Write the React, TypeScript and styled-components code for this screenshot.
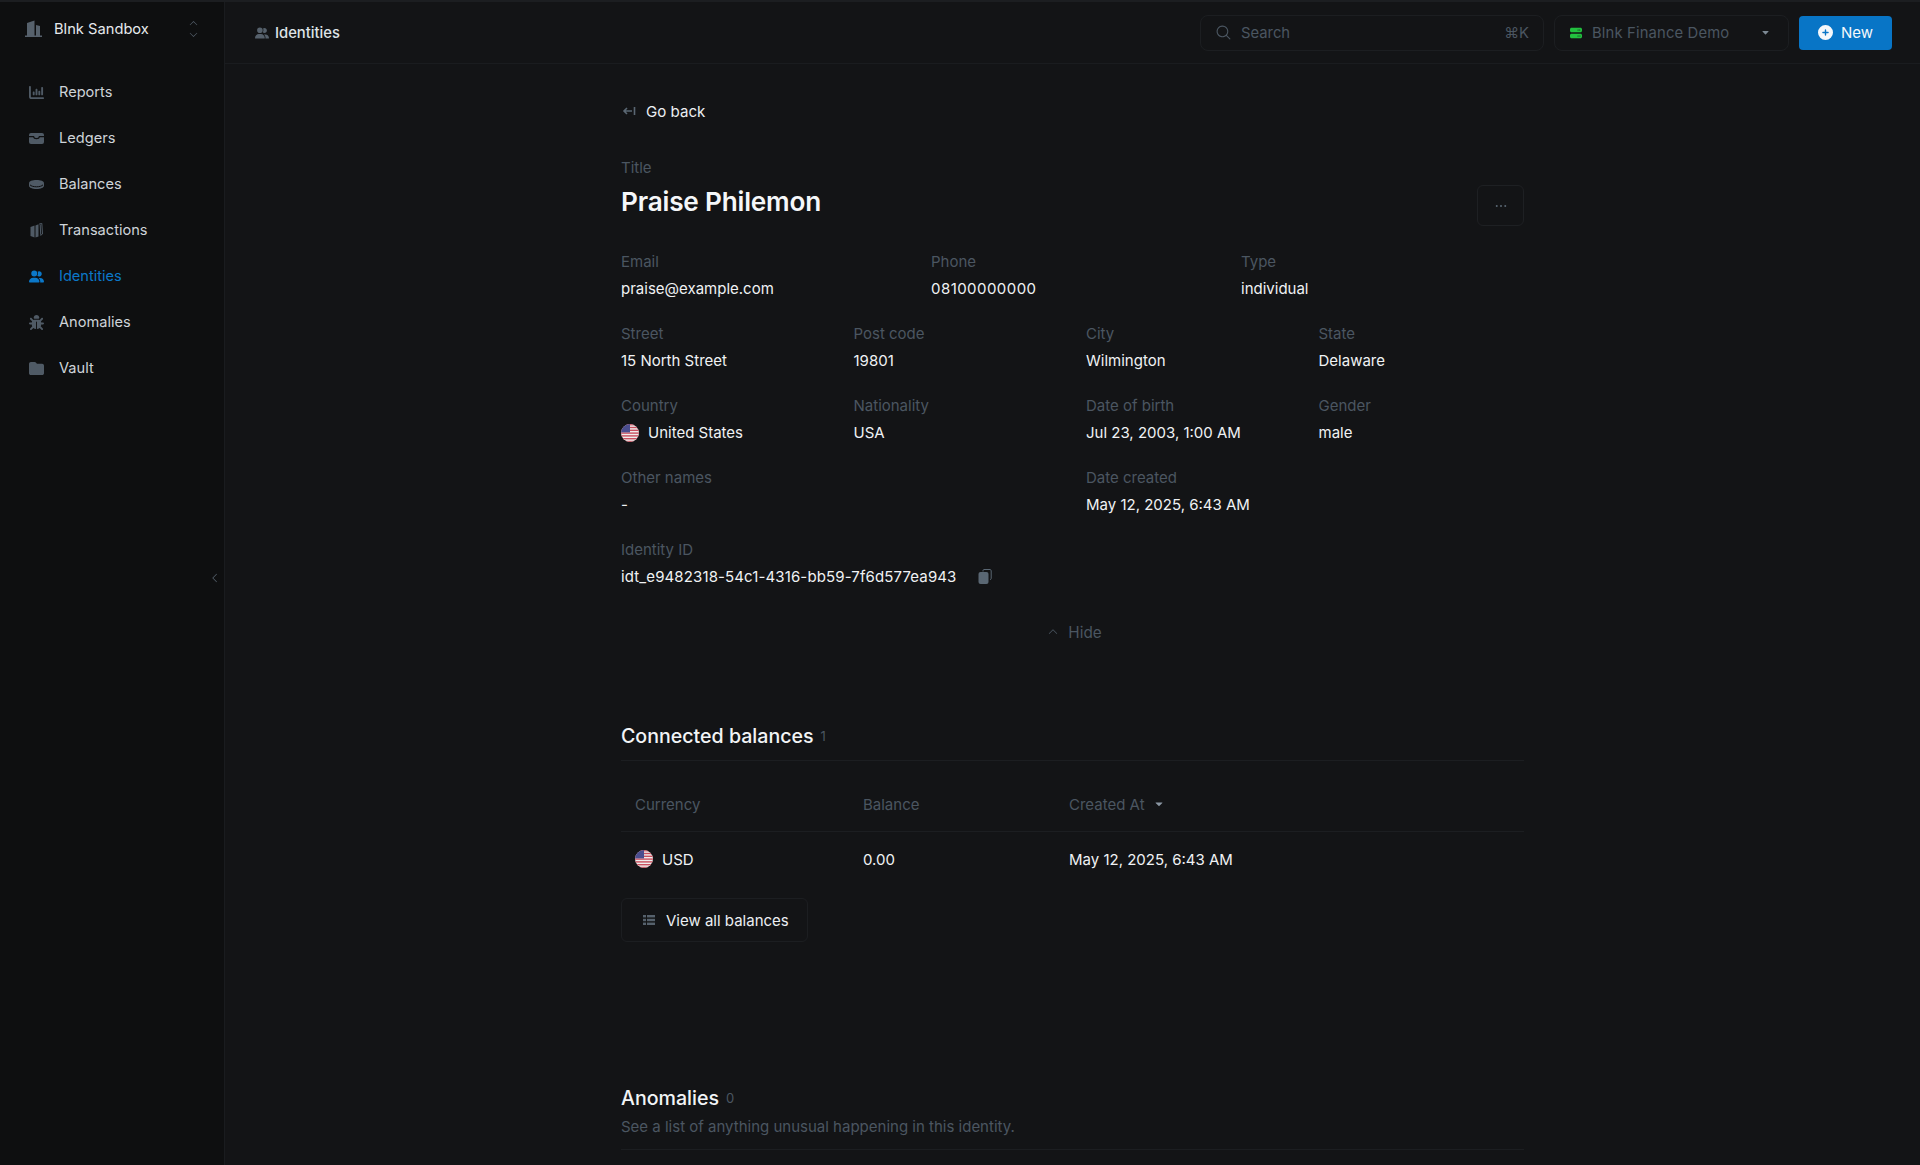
import styled, { createGlobalStyle } from 'styled-components';
import { FaBug, FaChartColumn, FaCirclePlus, FaFolder, FaServer, FaUserGroup } from 'react-icons/fa6';
import {
  PiCaretDown,
  PiCaretDownFill,
  PiCaretLeft,
  PiCaretUp,
  PiDotsThreeBold,
  PiMagnifyingGlass,
} from 'react-icons/pi';
import type { ReactNode } from 'react';

const GlobalStyle = createGlobalStyle`
  html, body {
    margin: 0;
    height: 100%;
    background: #131416;
    overflow: hidden;
  }
  body {
    font-family: Inter, "Liberation Sans", sans-serif;
    font-size: 15px;
    color: #f3f5f7;
  }
`;

const Shell = styled.div`
  display: flex;
  height: 1165px;
  border-top: 2px solid #1c1e21;
  box-sizing: border-box;
  overflow: hidden;
`;

const Sidebar = styled.aside`
  position: relative;
  flex: 0 0 225px;
  box-sizing: border-box;
  background: #0e0f10;
  border-right: 1px solid #1a1c1f;
`;

const Workspace = styled.div`
  display: flex;
  align-items: center;
  height: 53px;
  padding: 0 25px;
  font-size: 14.7px;
  color: #e6e9ec;
`;

const WorkspaceName = styled.span`
  margin-left: 12px;
  flex: 1;
`;

const UpDown = styled.span`
  display: flex;
  flex-direction: column;
  color: #56616c;
  font-size: 11px;
  line-height: 0;
`;

const Nav = styled.nav`
  display: flex;
  flex-direction: column;
  margin-top: 14px;
`;

const NavItem = styled.a<{ $active?: boolean }>`
  display: flex;
  align-items: center;
  height: 46px;
  padding-left: 29px;
  font-size: 14.6px;
  color: ${(p) => (p.$active ? '#0b78c9' : '#cfd4d9')};
`;

const NavIcon = styled.span<{ $active?: boolean }>`
  display: flex;
  align-items: center;
  justify-content: flex-start;
  width: 30px;
  font-size: 15px;
  color: ${(p) => (p.$active ? '#0b78c9' : '#4f5a65')};
`;

const Collapse = styled.span`
  position: absolute;
  top: 50%;
  right: 3px;
  margin-top: -12px;
  color: #56616c;
  font-size: 12px;
  line-height: 0;
`;

const Main = styled.div`
  flex: 1;
  min-width: 0;
`;

const TopBar = styled.header`
  display: flex;
  align-items: center;
  height: 62px;
  box-sizing: border-box;
  padding: 0 28px 0 30px;
  gap: 10px;
  border-bottom: 1px solid #1a1c1f;
`;

const Crumb = styled.div`
  display: flex;
  align-items: center;
  gap: 6px;
  flex: 1;
  font-size: 14.8px;
  font-weight: 500;
  color: #dfe3e7;
  svg {
    font-size: 14px;
    color: #56616c;
  }
`;

const Field = styled.div<{ $width: number }>`
  display: flex;
  align-items: center;
  width: ${(p) => p.$width}px;
  height: 36px;
  box-sizing: border-box;
  padding: 0 14px;
  border: 1px solid #1c1e21;
  border-radius: 8px;
  color: #4b5661;
  font-size: 14.8px;
  > svg {
    flex: none;
  }
`;

const FieldText = styled.span`
  flex: 1;
  margin-left: 9px;
`;

const ServerIcon = styled(FaServer)`
  margin: 0 1px;
  font-size: 12px;
  color: #22c13f;
`;

const FieldCaret = styled(PiCaretDownFill)`
  margin-right: 4px;
  font-size: 9px;
  color: #7d8994;
`;

const NewButton = styled.button`
  display: flex;
  align-items: center;
  justify-content: center;
  gap: 8px;
  width: 93px;
  height: 34px;
  border: 0;
  border-radius: 4px;
  background: #0875c6;
  color: #f5f8fb;
  font: inherit;
  svg {
    font-size: 15px;
  }
`;

const Content = styled.main`
  width: 903px;
  margin: 0 auto;
  padding-top: 35px;
`;

const BackLink = styled.a`
  display: flex;
  align-items: center;
  gap: 10px;
  height: 24px;
  padding-left: 1px;
  font-size: 15.1px;
  color: #eceff2;
`;

const Label = styled.div`
  height: 22px;
  line-height: 22px;
  color: #4b5661;
`;

const Value = styled.div`
  display: flex;
  align-items: center;
  gap: 9px;
  height: 22px;
  margin-top: 5px;
  line-height: 22px;
  color: #f0f2f4;
`;

const Tracked = styled.span<{ $spacing: number }>`
  letter-spacing: ${(p) => p.$spacing}px;
`;

const TitleRow = styled.div`
  display: flex;
  justify-content: space-between;
  align-items: flex-end;
  margin-top: 34px;
`;

const PageTitle = styled.h1`
  margin: 4px 0 0;
  font-size: 26.2px;
  line-height: 38px;
  font-weight: 600;
  letter-spacing: -0.2px;
  color: #f5f7f9;
`;

const MenuButton = styled.button`
  display: flex;
  align-items: center;
  justify-content: center;
  width: 47px;
  height: 41px;
  margin-bottom: -5px;
  background: none;
  border: 1px solid #1e2023;
  border-radius: 6px;
  color: #5a6773;
  font-size: 16px;
`;

const Grid = styled.div<{ $cols: number }>`
  display: grid;
  grid-template-columns: repeat(${(p) => p.$cols}, 1fr);
  column-gap: 26px;
  margin: 23px -1px 0 0;
`;

const DetailRows = styled.div`
  margin-top: 30px;
`;

const CopyButton = styled.span`
  display: inline-flex;
  margin-left: 12px;
`;

const HideToggle = styled.div`
  display: flex;
  align-items: center;
  justify-content: center;
  gap: 9px;
  margin-top: 32px;
  height: 24px;
  padding-left: 4px;
  font-size: 15.3px;
  color: #4b5661;
  svg {
    font-size: 12px;
  }
`;

const SectionHead = styled.div`
  display: flex;
  align-items: flex-start;
  gap: 7px;
  height: 28px;
  line-height: 28px;
  font-size: 19.6px;
  font-weight: 500;
  color: #f2f4f6;
`;

const Count = styled.span`
  font-size: 13px;
  font-weight: 400;
  color: #4b5661;
`;

const Balances = styled.section`
  margin-top: 78px;
`;

const Divider = styled.div`
  height: 1px;
  background: #1c1e21;
`;

const SectionRule = styled(Divider)`
  margin-top: 10px;
`;

const TableRow = styled.div`
  display: grid;
  grid-template-columns: 228px 206px 1fr;
  align-items: center;
  padding-left: 14px;
`;

const HeaderRow = styled(TableRow)`
  height: 71px;
  padding-top: 16px;
  box-sizing: border-box;
  color: #4b5661;
  border-bottom: 1px solid #1c1e21;
`;

const BodyRow = styled(TableRow)`
  height: 54px;
  margin-bottom: 12px;
  color: #f0f2f4;
`;

const SortCell = styled.span`
  display: flex;
  align-items: center;
  gap: 9px;
  svg {
    font-size: 10px;
    color: #8b97a3;
  }
`;

const Cell = styled.span`
  display: flex;
  align-items: center;
  gap: 9px;
`;

const ViewAll = styled.button`
  display: flex;
  align-items: center;
  gap: 10px;
  width: 187px;
  height: 44px;
  box-sizing: border-box;
  padding: 0 0 0 20px;
  background: none;
  border: 1px solid #1c1e21;
  border-radius: 6px;
  font: inherit;
  white-space: nowrap;
  color: #eceff2;
`;

const Anomalies = styled.section`
  margin-top: 142px;
`;

const SectionNote = styled.p`
  margin: 4px 0 11px;
  line-height: 22px;
  color: #4b5661;
`;

const FlagSvg = styled.svg`
  flex: none;
`;

const Flag = () => (
  <FlagSvg width="18" height="18" viewBox="0 0 18 18">
    <defs>
      <clipPath id="flag-circle">
        <circle cx="9" cy="9" r="9" />
      </clipPath>
    </defs>
    <g clipPath="url(#flag-circle)">
      <rect width="18" height="18" fill="#f1eded" />
      {[0, 2.8, 5.6, 8.4, 11.2, 14, 16.8].map((y) => (
        <rect key={y} y={y} width="18" height="1.4" fill="#c9505f" />
      ))}
      <rect width="9" height="8.4" fill="#4a4e8f" />
    </g>
  </FlagSvg>
);

const BuildingIcon = () => (
  <svg width="17" height="17" viewBox="0 0 17 17" fill="#56616c">
    <path d="M2 16V3l7.5-2.5V16z" />
    <path d="M11 5l4 1v10h-4z" />
    <rect y="15.5" width="17" height="1.5" />
  </svg>
);

const LedgerIcon = () => (
  <svg width="15" height="15" viewBox="0 0 15 15">
    <rect y="2" width="15" height="11" rx="2" fill="currentColor" />
    <path d="M0 5.6h4.6c.2 1.2 1.3 2 2.9 2s2.7-.8 2.9-2H15" fill="none" stroke="#0e0f10" strokeWidth="1.2" />
  </svg>
);

const CoinIcon = () => (
  <svg width="15" height="15" viewBox="0 0 15 15" fill="currentColor">
    <path d="M0 6.2C0 4.2 3.4 3 7.5 3S15 4.2 15 6.2v2.6c0 2-3.4 3.2-7.5 3.2S0 10.800 0 8.800z" />
    <path d="M1 7.800c1 1.300 3.600 2 6.500 2s5.500-.7 6.500-2" fill="none" stroke="#0e0f10" strokeWidth="1" />
  </svg>
);

const BooksIcon = () => (
  <svg width="15" height="15" viewBox="0 0 15 15" fill="currentColor">
    <path d="M1.500 4l4-1.500v12l-4-1.500z" />
    <path d="M6.500 2.500l3-1.200v12.200l-3 1z" />
    <path d="M10.500 1l2.300-.7.7 10.700-1.800 1.300-.4-.2.400-.500-.5-10z" fill="none" stroke="currentColor" strokeWidth="1" />
  </svg>
);

const BackIcon = () => (
  <svg width="14" height="14" viewBox="0 0 14 14" fill="none" stroke="#5a6773" strokeWidth="1.6">
    <path d="M12.500 3v8M10 7H2M5 4 2 7l3 3" />
  </svg>
);

const CopyIcon = () => (
  <svg width="14" height="16" viewBox="0 0 14 16">
    <path d="M5 2.500V1.500C5 1 5.500.5 6 .5h6c.6 0 1.200.6 1.200 1.200v7.800c0 .6-.6 1.100-1.200 1.100" fill="none" stroke="#5a6773" strokeWidth="1" />
    <rect x="0.500" y="3" width="10" height="12" rx="2" fill="#5a6773" />
  </svg>
);

const ListIcon = () => (
  <svg width="14" height="14" viewBox="0 0 14 14" fill="#56616c">
    <rect x="1" y="2" width="3" height="2.400" />
    <rect x="5" y="2" width="8" height="2.400" />
    <rect x="1" y="5.800" width="3" height="2.400" />
    <rect x="5" y="5.800" width="8" height="2.400" />
    <rect x="1" y="9.600" width="3" height="2.400" />
    <rect x="5" y="9.600" width="8" height="2.400" />
  </svg>
);

const Detail = ({ label, children }: { label: string; children: ReactNode }) => (
  <div>
    <Label>{label}</Label>
    <Value>{children}</Value>
  </div>
);

const navItems = [
  { label: 'Reports', icon: <FaChartColumn /> },
  { label: 'Ledgers', icon: <LedgerIcon /> },
  { label: 'Balances', icon: <CoinIcon /> },
  { label: 'Transactions', icon: <BooksIcon /> },
  { label: 'Identities', icon: <FaUserGroup />, active: true },
  { label: 'Anomalies', icon: <FaBug /> },
  { label: 'Vault', icon: <FaFolder /> },
];

export default function App() {
  return (
    <>
      <GlobalStyle />
      <Shell>
        <Sidebar>
          <Workspace>
            <BuildingIcon />
            <WorkspaceName>Blnk Sandbox</WorkspaceName>
            <UpDown>
              <PiCaretUp />
              <PiCaretDown />
            </UpDown>
          </Workspace>
          <Nav>
            {navItems.map((item) => (
              <NavItem key={item.label} $active={item.active}>
                <NavIcon $active={item.active}>{item.icon}</NavIcon>
                {item.label}
              </NavItem>
            ))}
          </Nav>
          <Collapse>
            <PiCaretLeft />
          </Collapse>
        </Sidebar>
        <Main>
          <TopBar>
            <Crumb>
              <FaUserGroup />
              Identities
            </Crumb>
            <Field $width={344}>
              <PiMagnifyingGlass size={17} />
              <FieldText>Search</FieldText>
              ⌘K
            </Field>
            <Field $width={235}>
              <ServerIcon />
              <FieldText>
                <Tracked $spacing={0.15}>Blnk Finance Demo</Tracked>
              </FieldText>
              <FieldCaret />
            </Field>
            <NewButton>
              <FaCirclePlus />
              New
            </NewButton>
          </TopBar>
          <Content>
            <BackLink>
              <BackIcon />
              Go back
            </BackLink>
            <TitleRow>
              <div>
                <Label>Title</Label>
                <PageTitle>Praise Philemon</PageTitle>
              </div>
              <MenuButton>
                <PiDotsThreeBold />
              </MenuButton>
            </TitleRow>
            <DetailRows>
              <Grid $cols={3}>
                <Detail label="Email">praise@example.com</Detail>
                <Detail label="Phone">
                  <Tracked $spacing={0.45}>08100000000</Tracked>
                </Detail>
                <Detail label="Type">individual</Detail>
              </Grid>
              <Grid $cols={4}>
                <Detail label="Street">15 North Street</Detail>
                <Detail label="Post code">19801</Detail>
                <Detail label="City">Wilmington</Detail>
                <Detail label="State">Delaware</Detail>
              </Grid>
              <Grid $cols={4}>
                <Detail label="Country">
                  <Flag />
                  United States
                </Detail>
                <Detail label="Nationality">USA</Detail>
                <Detail label="Date of birth">Jul 23, 2003, 1:00 AM</Detail>
                <Detail label="Gender">male</Detail>
              </Grid>
              <Grid $cols={2}>
                <Detail label="Other names">-</Detail>
                <Detail label="Date created">May 12, 2025, 6:43 AM</Detail>
              </Grid>
              <Grid $cols={1}>
                <Detail label="Identity ID">
                  <Tracked $spacing={0.12}>idt_e9482318-54c1-4316-bb59-7f6d577ea943</Tracked>
                  <CopyButton>
                    <CopyIcon />
                  </CopyButton>
                </Detail>
              </Grid>
            </DetailRows>
            <HideToggle>
              <PiCaretUp />
              Hide
            </HideToggle>
            <Balances>
              <SectionHead>
                Connected balances <Count>1</Count>
              </SectionHead>
              <SectionRule />
              <HeaderRow>
                <span>Currency</span>
                <span>Balance</span>
                <SortCell>
                  Created At
                  <PiCaretDownFill />
                </SortCell>
              </HeaderRow>
              <BodyRow>
                <Cell>
                  <Flag />
                  USD
                </Cell>
                <span>0.00</span>
                <span>May 12, 2025, 6:43 AM</span>
              </BodyRow>
              <ViewAll>
                <ListIcon />
                View all balances
              </ViewAll>
            </Balances>
            <Anomalies>
              <SectionHead>
                Anomalies <Count>0</Count>
              </SectionHead>
              <SectionNote>See a list of anything unusual happening in this identity.</SectionNote>
              <Divider />
            </Anomalies>
          </Content>
        </Main>
      </Shell>
    </>
  );
}
